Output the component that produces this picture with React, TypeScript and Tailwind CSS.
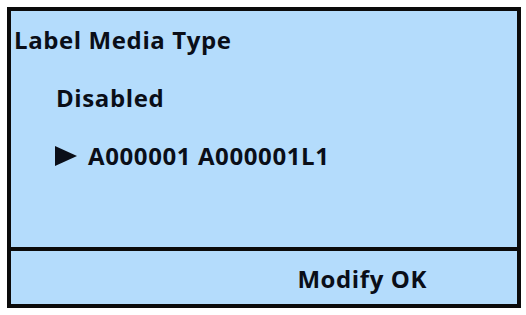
import React from "react";

export default function App() {
  return (
    <div className="w-[526px] h-[315px] bg-white pt-[7px] pl-[7px]" style={{ fontFamily: "'Open Sans', sans-serif" }}>
      <div className="w-[514px] h-[301px] border-[4px] border-[#0b0b0b] bg-[#b4dcfc] flex flex-col text-[#0a0e18] font-bold text-[24px] leading-[26px] tracking-[0.6px]">
        {/* main area */}
        <div className="h-[236px] flex flex-col">
          <div className="pl-[3px] pt-[16px]">Label Media Type</div>
          <div className="pl-[45px] pt-[32px]">Disabled</div>
          <div className="pl-[44px] pt-[32px] flex items-center gap-[11px]">
            <svg width="22" height="20" viewBox="0 0 22 20" className="shrink-0">
              <polygon points="0,0 22,10 0,20" fill="#0a0e18" />
            </svg>
            <span>A000001 A000001L1</span>
          </div>
        </div>
        {/* soft key bar */}
        <div className="flex-1 border-t-[4px] border-[#0b0b0b] flex justify-end items-center pt-[3px] pr-[90px]">
          Modify OK
        </div>
      </div>
    </div>
  );
}
